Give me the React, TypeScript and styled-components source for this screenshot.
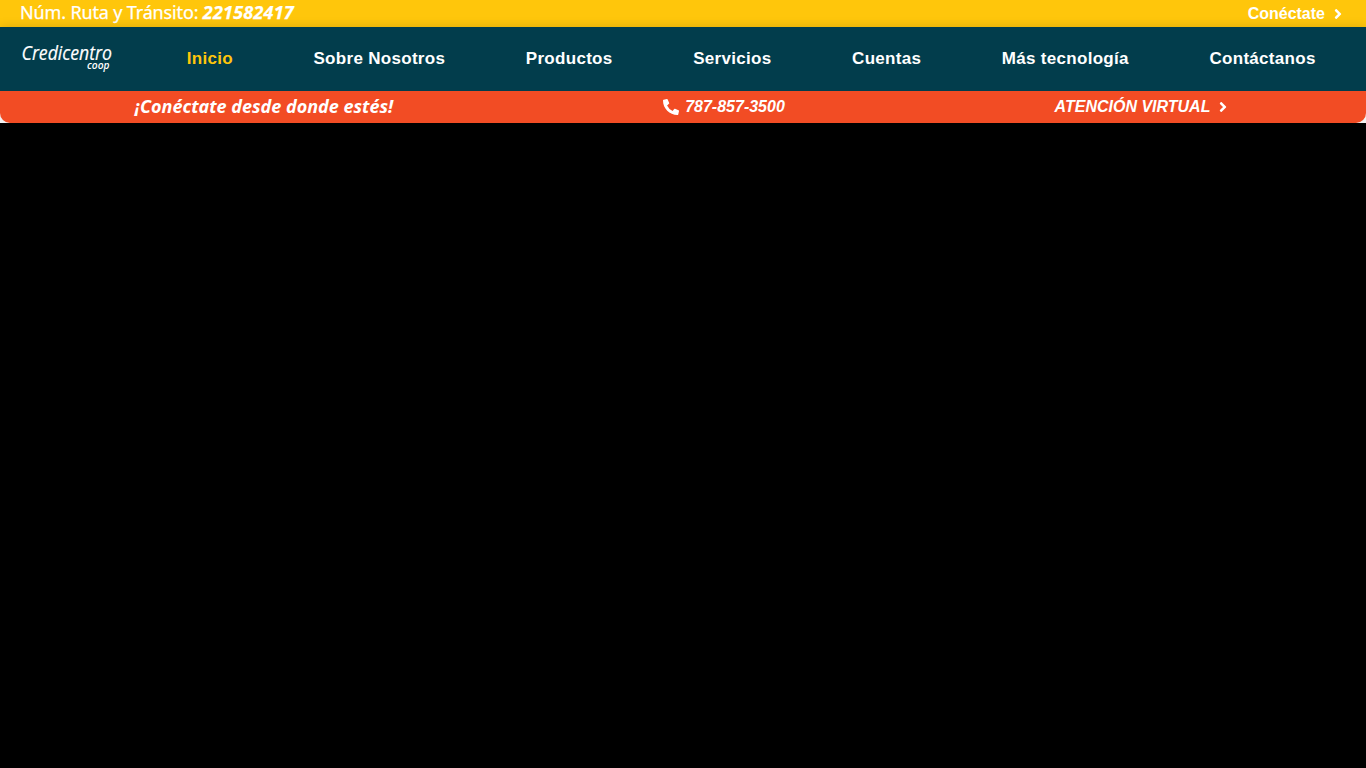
import React from "react";
import styled, { createGlobalStyle } from "styled-components";
import { FaAngleRight, FaPhoneAlt } from "react-icons/fa";

const GlobalStyle = createGlobalStyle`
  * { box-sizing: border-box; }
  body { margin: 0; background: #000; overflow: hidden; font-family: "Liberation Sans", Arial, sans-serif; }
`;

const Page = styled.div`
  height: 768px;
  background: #000;
`;

const TopBar = styled.div`
  height: 27px;
  padding: 0 20px;
  display: flex;
  align-items: center;
  justify-content: space-between;
  background: #ffc60b;
  color: #fff;
`;

const Routing = styled.div`
  font: 400 18px/25px "Noto Sans", sans-serif;
  letter-spacing: -0.15px;
  white-space: pre;
  height: 27px;
  -webkit-text-stroke: 0.25px #fff;
`;

const RoutingNumber = styled.span`
  font-weight: 700;
  font-style: italic;
  letter-spacing: 0.2px;
`;

const ActionLink = styled.a<{ $italic?: boolean }>`
  display: flex;
  align-items: center;
  gap: 5px;
  font-size: 16px;
  line-height: 18px;
  font-weight: 700;
  font-style: ${(p) => (p.$italic ? "italic" : "normal")};
  color: #fff;
`;

const MainNav = styled.header`
  position: relative;
  height: 64px;
  padding: 0 10px 0 20px;
  display: flex;
  align-items: center;
  justify-content: space-between;
  background: #023d4c;
  box-shadow: 0 0 10px rgba(0, 0, 0, 0.15);
`;

const Menu = styled.nav`
  display: flex;
`;

const MenuItem = styled.a<{ $active?: boolean }>`
  padding: 0 40.3px;
  font-size: 17px;
  line-height: 20px;
  font-weight: 700;
  letter-spacing: 0.3px;
  white-space: nowrap;
  color: ${(p) => (p.$active ? "#ffc60b" : "#fff")};
`;

const StripFrame = styled.div`
  position: relative;
  background: #f3f3f3;
`;

const ContactStrip = styled.div`
  height: 32px;
  display: grid;
  grid-template-columns: 528px 392px 446px;
  align-items: center;
  justify-items: center;
  background: #f24c24;
  border-radius: 0 0 10px 10px;
`;

const Slogan = styled.div`
  height: 32px;
  font: italic 700 18px/30px "Noto Sans", sans-serif;
  color: #fff;
  white-space: nowrap;
`;

const Phone = styled(ActionLink)`
  gap: 6px;
`;

const LogoMark = styled.svg`
  display: block;
  overflow: visible;
`;

const items = ["Inicio", "Sobre Nosotros", "Productos", "Servicios", "Cuentas", "Más tecnología", "Contáctanos"];

const Logo = () => (
  <LogoMark width="94" height="34" viewBox="0 0 94 34" fill="#fff" fontFamily="Open Sans, sans-serif" fontStyle="italic">
    <text x="1.5" y="18" fontSize="20.5" stroke="#fff" strokeWidth="0.2" textLength="90.5" lengthAdjust="spacingAndGlyphs">Credicentro</text>
    <text x="67" y="27.2" fontSize="11.5" fontWeight="600" textLength="22.5" lengthAdjust="spacingAndGlyphs">coop</text>
  </LogoMark>
);

export default function App() {
  return (
    <Page>
      <GlobalStyle />
      <TopBar>
        <Routing>
          Núm. Ruta y Tránsito: <RoutingNumber>221582417</RoutingNumber>
        </Routing>
        <ActionLink>
          Conéctate <FaAngleRight size={16} />
        </ActionLink>
      </TopBar>
      <MainNav>
        <Logo />
        <Menu>
          {items.map((item, i) => (
            <MenuItem key={item} $active={i === 0}>{item}</MenuItem>
          ))}
        </Menu>
      </MainNav>
      <StripFrame>
        <ContactStrip>
          <Slogan>¡Conéctate desde donde estés!</Slogan>
          <Phone $italic>
            <FaPhoneAlt size={16} /> 787-857-3500
          </Phone>
          <ActionLink $italic>
            ATENCIÓN VIRTUAL <FaAngleRight size={16} />
          </ActionLink>
        </ContactStrip>
      </StripFrame>
    </Page>
  );
}
